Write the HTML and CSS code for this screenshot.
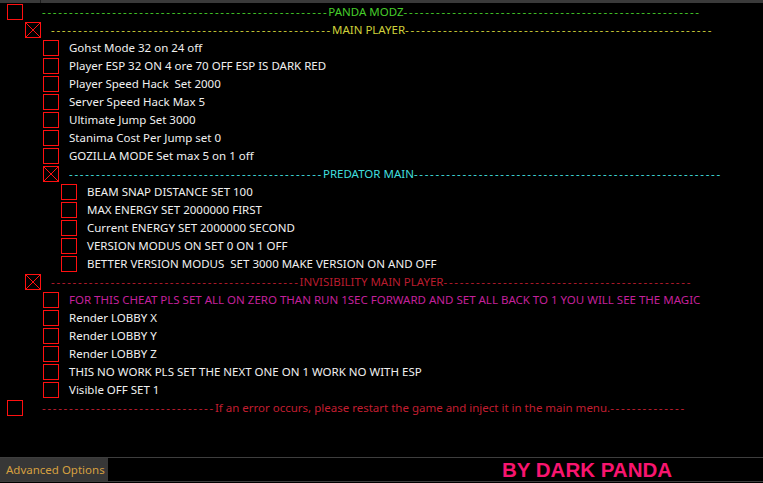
FILE: index.html
```html
<!DOCTYPE html>
<html>
<head>
<meta charset="utf-8">
<link rel="stylesheet" href="styles.css">
</head>
<body>
<div class="window">
  <div class="header"><span class="hcol"></span></div>
  <div class="tree">
    <div class="row l0"><span class="cb"></span><span class="txt green"><span class="dash">-----------------------------------------------------</span>PANDA MODZ<span class="dash">-------------------------------------------------------</span></span></div>
    <div class="row l1"><span class="cb x"><svg viewBox="0 0 16 16"><path d="M1 1L15 15M15 1L1 15"/></svg></span><span class="txt yellow"><span class="dash">----------------------------------------------------</span>MAIN PLAYER<span class="dash">---------------------------------------------------------</span></span></div>
    <div class="row l2"><span class="cb"></span><span class="txt">Gohst Mode 32 on 24 off</span></div>
    <div class="row l2"><span class="cb"></span><span class="txt">Player ESP 32 ON 4 ore 70 OFF ESP IS DARK RED</span></div>
    <div class="row l2"><span class="cb"></span><span class="txt">Player Speed Hack&nbsp; Set 2000</span></div>
    <div class="row l2"><span class="cb"></span><span class="txt">Server Speed Hack Max 5</span></div>
    <div class="row l2"><span class="cb"></span><span class="txt">Ultimate Jump Set 3000</span></div>
    <div class="row l2"><span class="cb"></span><span class="txt">Stanima Cost Per Jump set 0</span></div>
    <div class="row l2"><span class="cb"></span><span class="txt">GOZILLA MODE Set max 5 on 1 off</span></div>
    <div class="row l2"><span class="cb x"><svg viewBox="0 0 16 16"><path d="M1 1L15 15M15 1L1 15"/></svg></span><span class="txt cyan"><span class="dash">-----------------------------------------------</span>PREDATOR MAIN<span class="dash">---------------------------------------------------------</span></span></div>
    <div class="row l3"><span class="cb"></span><span class="txt">BEAM SNAP DISTANCE SET 100</span></div>
    <div class="row l3"><span class="cb"></span><span class="txt">MAX ENERGY SET 2000000 FIRST</span></div>
    <div class="row l3"><span class="cb"></span><span class="txt">Current ENERGY SET 2000000 SECOND</span></div>
    <div class="row l3"><span class="cb"></span><span class="txt">VERSION MODUS ON SET 0 ON 1 OFF</span></div>
    <div class="row l3"><span class="cb"></span><span class="txt">BETTER VERSION MODUS&nbsp; SET 3000 MAKE VERSION ON AND OFF</span></div>
    <div class="row l1"><span class="cb x"><svg viewBox="0 0 16 16"><path d="M1 1L15 15M15 1L1 15"/></svg></span><span class="txt red"><span class="dash">----------------------------------------------</span>INVISIBILITY MAIN PLAYER<span class="dash">----------------------------------------------</span></span></div>
    <div class="row l2"><span class="cb"></span><span class="txt magenta">FOR THIS CHEAT PLS SET ALL ON ZERO THAN RUN 1SEC FORWARD AND SET ALL BACK TO 1 YOU WILL SEE THE MAGIC</span></div>
    <div class="row l2"><span class="cb"></span><span class="txt">Render LOBBY X</span></div>
    <div class="row l2"><span class="cb"></span><span class="txt">Render LOBBY Y</span></div>
    <div class="row l2"><span class="cb"></span><span class="txt">Render LOBBY Z</span></div>
    <div class="row l2"><span class="cb"></span><span class="txt">THIS NO WORK PLS SET THE NEXT ONE ON 1 WORK NO WITH ESP</span></div>
    <div class="row l2"><span class="cb"></span><span class="txt">Visible OFF SET 1</span></div>
    <div class="row l0"><span class="cb"></span><span class="txt errred"><span class="dash">--------------------------------</span>If an error occurs, please restart the game and inject it in the main menu.<span class="dash">--------------</span></span></div>
  </div>
  <div class="bottom">
    <div class="advbtn">Advanced Options</div>
    <div class="sign">BY DARK PANDA</div>
  </div>
</div>
</body>
</html>
```
FILE: styles.css
```css
html, body {
  margin: 0;
  padding: 0;
  background: #000;
}
.window {
  width: 763px;
  height: 483px;
  display: flex;
  flex-direction: column;
  background: #000;
  font-family: "Noto Sans", "Open Sans", sans-serif;
  font-size: 11.5px;
  color: #f0f0f0;
  overflow: hidden;
}
.header {
  height: 3px;
  background: #3a3a3a;
  display: flex;
}
.hcol {
  width: 40px;
  border-right: 1px solid #1c1c1c;
}
.tree {
  flex: 1;
  display: flex;
  flex-direction: column;
}
.row {
  height: 18px;
  display: flex;
  align-items: center;
  white-space: nowrap;
}
.l0 { padding-left: 7px; }
.l1 { padding-left: 25px; }
.l2 { padding-left: 43px; }
.l3 { padding-left: 61px; }
.cb {
  width: 16px;
  height: 16px;
  box-sizing: border-box;
  border: 1px solid #ff1010;
  flex: none;
  position: relative;
}
.cb svg {
  position: absolute;
  left: -1px;
  top: -1px;
  width: 16px;
  height: 16px;
}
.cb svg path {
  stroke: #ff1010;
  stroke-width: 1;
  fill: none;
}
.txt {
  margin-left: 10px;
  line-height: 18px;
}
.l0 .txt { margin-left: 19px; }
.dash { letter-spacing: 1.7px; }
.green { color: #46cc2a; }
.yellow { color: #cfd03a; }
.cyan { color: #40dede; }
.red { color: #b81c2e; }
.magenta { color: #c4209c; }
.errred { color: #c21e30; }
.bottom {
  height: 23px;
  border-top: 1px solid #3e3e3e;
  border-bottom: 1px solid #3e3e3e;
  display: flex;
  align-items: stretch;
  margin-bottom: 1px;
}
.advbtn {
  width: 108px;
  background: #373737;
  color: #d6a040;
  padding-left: 6px;
  box-sizing: border-box;
  display: flex;
  align-items: center;
  white-space: nowrap;
  font-size: 11.5px;
}
.sign {
  margin-left: 394px;
  font-family: "Liberation Sans", Arial, sans-serif;
  font-weight: bold;
  font-size: 20.5px;
  color: #f8156f;
  display: flex;
  align-items: center;
}
```
